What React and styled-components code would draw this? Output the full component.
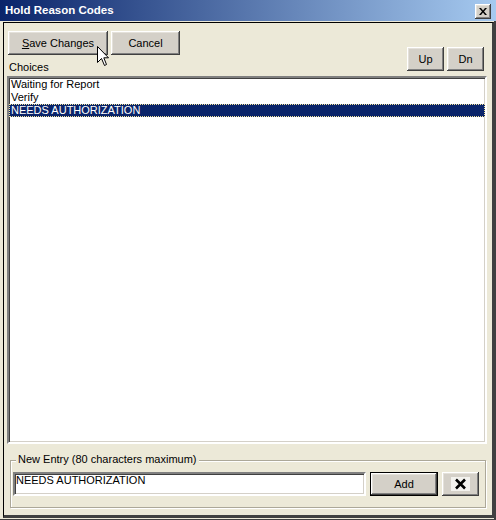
import React from "react";
import styled, { createGlobalStyle } from "styled-components";

const GlobalStyle = createGlobalStyle`
  html, body {
    margin: 0;
    padding: 0;
    background: #ece9d8;
  }
  body {
    font-family: "Liberation Sans", Arial, sans-serif;
    font-size: 11px;
    color: #000;
  }
  * {
    box-sizing: border-box;
  }
`;

const bevel = `
  background: #d4d0c8;
  box-shadow: inset -1px -1px #404040, inset 1px 1px #ffffff,
    inset -2px -2px #808080, inset 2px 2px #e4e1da;
`;

const Window = styled.div`
  position: relative;
  width: 496px;
  height: 520px;
  display: flex;
  flex-direction: column;
  background: #ece9d8;
  overflow: hidden;
`;

const TitleBar = styled.div`
  height: 21px;
  flex-shrink: 0;
  display: flex;
  align-items: flex-start;
  justify-content: space-between;
  padding: 4px 5px 0 5px;
  background: linear-gradient(to right, #0a246a, #a6caf0);
`;

const Title = styled.span`
  color: #fff;
  font-weight: bold;
  font-size: 11.5px;
  line-height: 13px;
`;

const CloseButton = styled.div`
  ${bevel}
  width: 16px;
  height: 15px;
  display: flex;
  align-items: center;
  justify-content: center;
`;

const Frame = styled.div`
  flex: 1;
  display: flex;
  padding: 1px 1px 1px 3px;
  border-right: 2px solid #404040;
  border-bottom: 1px solid #404040;
`;

const Panel = styled.div`
  flex: 1;
  display: flex;
  flex-direction: column;
  border-top: 1px solid #000;
  border-left: 1px solid #000;
  border-right: 2px solid #404040;
  border-bottom: 3px solid #404040;
`;

const Header = styled.div`
  display: flex;
  justify-content: space-between;
  align-items: flex-end;
  padding: 8px 8px 0 4px;
`;

const LeftCol = styled.div`
  display: flex;
  flex-direction: column;
`;

const ButtonRow = styled.div`
  display: flex;
  gap: ${(p) => p.$gap || 3}px;
  margin-bottom: ${(p) => p.$mb || 0}px;
`;

const Button = styled.div`
  ${bevel}
  width: ${(p) => p.$w}px;
  height: ${(p) => p.$h || 24}px;
  display: flex;
  align-items: center;
  justify-content: center;
  font-size: 11px;
  line-height: 13px;
  ${(p) =>
    p.$default &&
    `
    border: 1px solid #000;
  `}
`;

const Label = styled.div`
  margin: 6px 0 0 1px;
  line-height: 13px;
`;

const ListBox = styled.div`
  flex: 1;
  margin: 2px 5px 0 3px;
  background: #fff;
  border: 2px solid;
  border-color: #808080 #ffffff #ffffff #808080;
  box-shadow: inset 1px 1px #404040, inset -1px -1px #d4d0c8;
`;

const ListItem = styled.div`
  height: 13px;
  line-height: 13px;
  padding-left: 2px;
  white-space: nowrap;
  ${(p) =>
    p.$selected &&
    `
    background: #0a246a;
    color: #fff;
    outline: 1px dotted #f2e39a;
    outline-offset: -1px;
  `}
`;

const Group = styled.div`
  position: relative;
  margin: 16px 6px 7px 6px;
  padding: 11px 6px 11px 2px;
  border: 1px solid #aca899;
  box-shadow: inset 1px 1px #fff, 1px 1px #fff;
  display: flex;
  gap: 4px;
`;

const Legend = styled.span`
  position: absolute;
  top: -8px;
  left: 5px;
  padding: 0 2px;
  background: #ece9d8;
  line-height: 13px;
`;

const EntryField = styled.textarea`
  width: 353px;
  height: 24px;
  margin: 0;
  padding: 0 1px;
  resize: none;
  overflow: hidden;
  font-family: "Liberation Sans", Arial, sans-serif;
  font-size: 11px;
  line-height: 13px;
  color: #000;
  background: #fff;
  border: 2px solid;
  border-color: #808080 #ffffff #ffffff #808080;
  box-shadow: inset 1px 1px #404040, inset -1px -1px #d4d0c8;
  outline: none;
`;

const Cursor = styled.svg`
  position: absolute;
  left: 97px;
  top: 46px;
`;

const choices = ["Waiting for Report", "Verify", "NEEDS AUTHORIZATION"];

export default function App() {
  return (
    <>
      <GlobalStyle />
      <Window>
        <TitleBar>
          <Title>Hold Reason Codes</Title>
          <CloseButton>
            <svg width="8" height="7" viewBox="0 0 8 7">
              <path d="M0 0h2l2 2.5L6 0h2L5 3.5 8 7H6L4 4.5 2 7H0l3-3.5z" fill="#000" />
            </svg>
          </CloseButton>
        </TitleBar>
        <Frame>
          <Panel>
            <Header>
              <LeftCol>
                <ButtonRow>
                  <Button $w={100}>
                    <span>
                      <u>S</u>ave Changes
                    </span>
                  </Button>
                  <Button $w={69}>Cancel</Button>
                </ButtonRow>
                <Label>Choices</Label>
              </LeftCol>
              <ButtonRow $mb={3}>
                <Button $w={37}>Up</Button>
                <Button $w={37}>Dn</Button>
              </ButtonRow>
            </Header>
            <ListBox>
              {choices.map((c, i) => (
                <ListItem key={c} $selected={i === choices.length - 1}>
                  {c}
                </ListItem>
              ))}
            </ListBox>
            <Group>
              <Legend>New Entry (80 characters maximum)</Legend>
              <EntryField readOnly defaultValue="NEEDS AUTHORIZATION" />
              <Button $w={68} $default>
                Add
              </Button>
              <Button $w={37}>
                <svg width="19" height="14" viewBox="0 0 19 14">
                  <rect width="19" height="14" fill="#f3f2ee" />
                  <path d="M5 2.5l9 9M14 2.5l-9 9" stroke="#000" strokeWidth="2.6" />
                </svg>
              </Button>
            </Group>
          </Panel>
        </Frame>
        <Cursor width="13" height="21" viewBox="0 0 13 21">
          <path
            d="M0.5 0.5 L0.5 16.5 L4.5 12.5 L7.5 19.5 L9.5 18.5 L6.8 11.8 L11.5 11.8 Z"
            fill="#fff"
            stroke="#000"
            strokeWidth="1"
            strokeLinejoin="miter"
          />
        </Cursor>
      </Window>
    </>
  );
}
